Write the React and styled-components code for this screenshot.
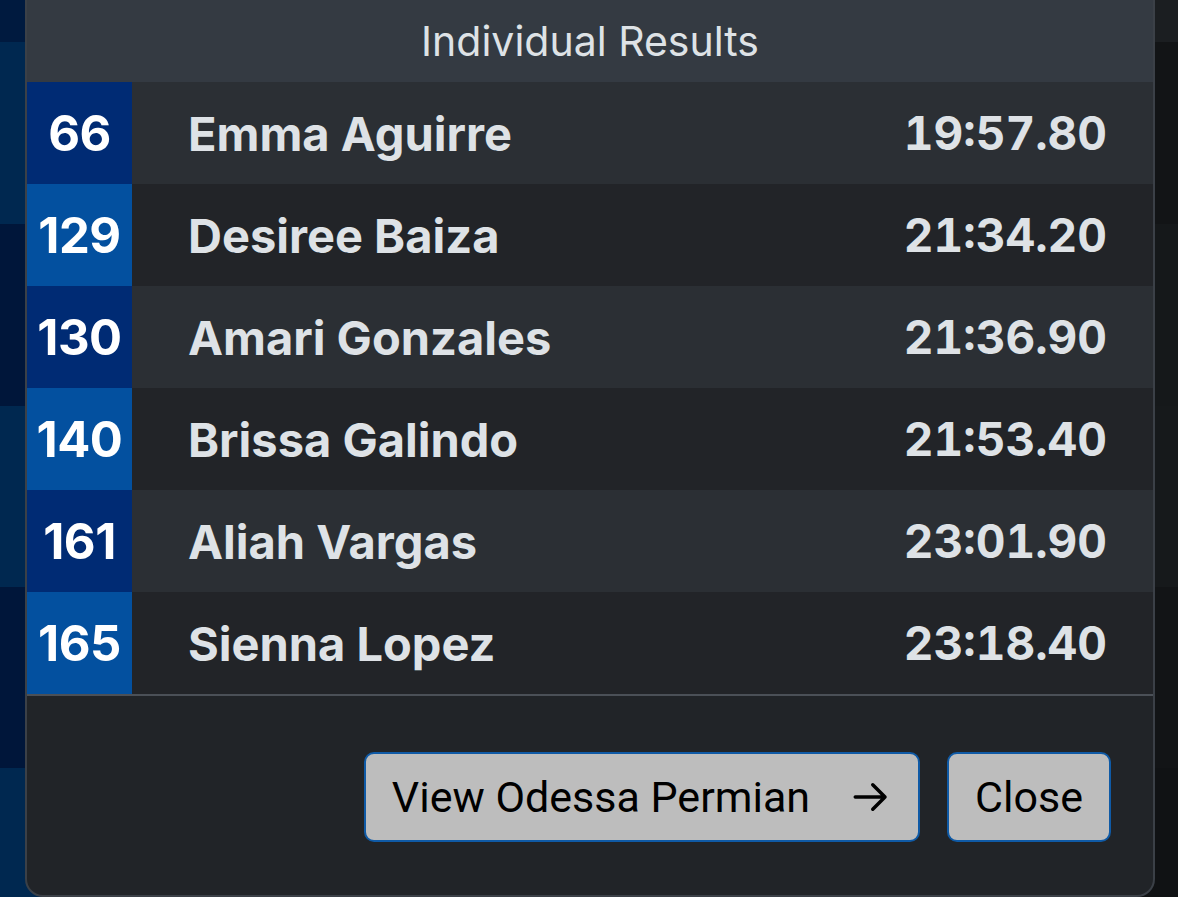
import styled, { createGlobalStyle } from "styled-components";

const GlobalStyle = createGlobalStyle`
    html, body {
        margin: 0;
        padding: 0;
        background: #121416;
        overflow: hidden;
    }
    * {
        box-sizing: border-box;
    }
`;

const results = [
    { bib: 66, name: "Emma Aguirre", time: "19:57.80" },
    { bib: 129, name: "Desiree Baiza", time: "21:34.20" },
    { bib: 130, name: "Amari Gonzales", time: "21:36.90" },
    { bib: 140, name: "Brissa Galindo", time: "21:53.40" },
    { bib: 161, name: "Aliah Vargas", time: "23:01.90" },
    { bib: 165, name: "Sienna Lopez", time: "23:18.40" },
];

const bands = [
    { h: 42, left: "#001a3f", right: "#1b1e21" },
    { h: 182, left: "#002850", right: "#121416" },
    { h: 182, left: "#00163a", right: "#15181a" },
    { h: 181, left: "#002850", right: "#16191b" },
    { h: 181, left: "#00163a", right: "#121416" },
    { h: 129, left: "#002850", right: "#101214" },
];

function App() {
    return (
        <Screen>
            <GlobalStyle />
            <Backdrop>
                {bands.map((b, i) => (
                    <Band key={i} $h={b.h} $left={b.left} $right={b.right} />
                ))}
            </Backdrop>
            <Modal>
                <Header>Individual Results</Header>
                <List>
                    {results.map((r, i) => (
                        <Row key={r.bib} $odd={i % 2 === 1}>
                            <Bib $odd={i % 2 === 1}>{r.bib}</Bib>
                            <Name>{r.name}</Name>
                            <Time>{r.time}</Time>
                        </Row>
                    ))}
                </List>
                <Footer>
                    <Button>
                        View Odessa Permian
                        <Arrow viewBox="0 0 24 24">
                            <path d="M3 12h17M13 5l7 7-7 7" />
                        </Arrow>
                    </Button>
                    <Button>Close</Button>
                </Footer>
            </Modal>
        </Screen>
    );
}

const Screen = styled.div`
    position: relative;
    width: 1178px;
    height: 897px;
    overflow: hidden;
`;

const Backdrop = styled.div`
    display: flex;
    flex-direction: column;
    height: 100%;
`;

const Band = styled.div`
    height: ${(p) => p.$h}px;
    background: linear-gradient(
        to right,
        ${(p) => p.$left} 0,
        ${(p) => p.$left} 600px,
        ${(p) => p.$right} 600px
    );
`;

const Modal = styled.div`
    position: absolute;
    left: 25px;
    top: -2px;
    width: 1130px;
    height: 899px;
    display: flex;
    flex-direction: column;
    background: #212428;
    border: 2px solid #3b4047;
    border-radius: 0 0 18px 18px;
    overflow: hidden;
    font-family: Inter, "Noto Sans", sans-serif;
`;

const Header = styled.div`
    height: 82px;
    display: flex;
    align-items: center;
    justify-content: center;
    background: #343a42;
    color: #dee2e6;
    font-size: 41px;
    font-weight: 400;
`;

const List = styled.div`
    display: flex;
    flex-direction: column;
`;

const Row = styled.div`
    height: 102px;
    display: flex;
    align-items: center;
    background: ${(p) => (p.$odd ? "#222428" : "#2b2f34")};
    color: #dee2e6;
    font-weight: 700;
    font-size: 47px;
`;

const Bib = styled.div`
    width: 105px;
    height: 100%;
    display: flex;
    align-items: center;
    justify-content: center;
    background: ${(p) => (p.$odd ? "#03509f" : "#002b74")};
    color: #ffffff;
    font-size: 49px;
    letter-spacing: -0.5px;
`;

const Name = styled.div`
    flex: 1;
    padding-left: 56px;
`;

const Time = styled.div`
    padding-right: 46px;
    font-size: 46px;
    font-variant-numeric: tabular-nums;
`;

const Footer = styled.div`
    flex: 1;
    display: flex;
    justify-content: flex-end;
    align-items: flex-start;
    gap: 27px;
    padding: 56px 42px 0 0;
    border-top: 2px solid #4b5057;
`;

const Button = styled.button`
    height: 90px;
    display: flex;
    align-items: center;
    gap: 40px;
    padding: 0 26px;
    background: #bdbdbd;
    border: 2px solid #0f5aa6;
    border-radius: 10px;
    color: #000000;
    font-family: Roboto, "Liberation Sans", sans-serif;
    font-size: 43px;
`;

const Arrow = styled.svg`
    width: 42px;
    height: 42px;
    fill: none;
    stroke: #000000;
    stroke-width: 2;
    stroke-linecap: round;
    stroke-linejoin: round;
`;

export default App;
